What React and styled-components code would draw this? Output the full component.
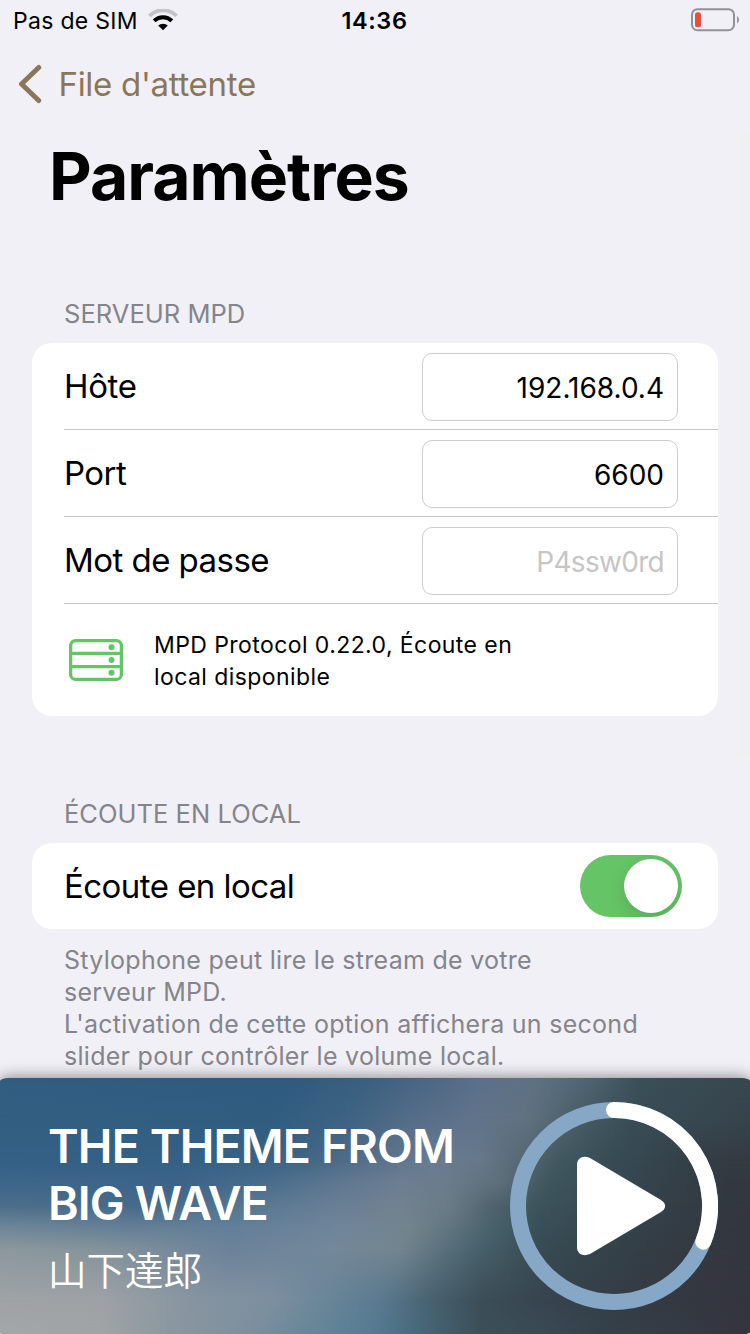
import React from "react";
import styled, { createGlobalStyle } from "styled-components";

const GlobalStyle = createGlobalStyle`
  * { box-sizing: border-box; }
  html, body { margin: 0; padding: 0; background: #f1f0f6; }
  body { font-family: Inter, "Noto Sans CJK JP", sans-serif; color: #000; }
`;

const Screen = styled.div`
  position: relative;
  width: 750px;
  height: 1334px;
  display: flex;
  flex-direction: column;
  overflow: hidden;
  background: #f1f0f6;
`;

const StatusBar = styled.header`
  height: 40px;
  flex: none;
  display: grid;
  grid-template-columns: 1fr auto 1fr;
  grid-template-rows: 40px;
  align-items: center;
  padding: 0 11px 0 13px;
  font-size: 23px;
  line-height: 38px;
`;

const Carrier = styled.div`
  display: flex;
  align-items: center;
  gap: 10px;
  padding-top: 2px;
  letter-spacing: 0.3px;

  svg { margin-top: -2px; }
`;

const Clock = styled.time`
  padding-top: 2px;
  margin-left: -3px;
  font-size: 23.5px;
  font-weight: 600;
  letter-spacing: 0.6px;
`;

const Battery = styled.svg`
  justify-self: end;
`;

const NavBar = styled.nav`
  height: 88px;
  flex: none;
  display: flex;
  align-items: center;
  padding-left: 18px;
`;

const BackLink = styled.a`
  display: flex;
  align-items: center;
  gap: 16.5px;
  color: #8a775b;
  font-size: 33px;
  line-height: 40px;
  letter-spacing: -0.3px;
`;

const Content = styled.main`
  flex: 1;
  min-height: 0;
  overflow: hidden;
`;

const ScrollTrough = styled.div`
  position: absolute;
  top: 134px;
  right: 0;
  width: 12px;
  height: 623px;
  background: #efeff4;
`;

const Title = styled.h1`
  margin: 0;
  padding: 8px 0 0 49px;
  font-size: 66px;
  line-height: 80px;
  font-weight: 700;
  letter-spacing: -1px;
`;

const SectionHeader = styled.h2`
  margin: ${(p) => p.$gap}px 0 13px 64px;
  font-size: 25.5px;
  line-height: 32px;
  font-weight: 400;
  letter-spacing: 0.03px;
  color: #85848a;
`;

const Card = styled.section`
  margin: 0 32px;
  padding-left: 32px;
  border-radius: 20px;
  background: #fff;
`;

const Row = styled.div`
  height: ${(p) => p.$height || 87}px;
  display: flex;
  align-items: center;
  justify-content: space-between;
  padding-right: ${(p) => p.$end || 40}px;
  border-bottom: ${(p) => (p.$last ? "none" : "1px solid #c6c6c8")};
`;

const Label = styled.label`
  font-size: 33px;
  line-height: 40px;
  letter-spacing: ${(p) => p.$track || -0.55}px;
`;

const Field = styled.input`
  width: 256px;
  height: 68px;
  margin: 2px 0 0;
  padding: 2px 13px 0;
  border: 1px solid #cdcdcd;
  border-radius: 10px;
  background: #fff;
  color: #000;
  font: 400 28px Inter, sans-serif;
  text-align: right;
  outline: none;
  &::placeholder { color: #c5c5c7; opacity: 1; letter-spacing: -0.7px; }
`;

const ServerRow = styled.div`
  height: 112px;
  display: flex;
  align-items: center;
  padding-left: 4px;
  gap: 30px;
`;

const ServerText = styled.p`
  margin: 0;
  padding-top: 1px;
  font-size: 23px;
  line-height: 32px;
  letter-spacing: 0.42px;
`;

const Switch = styled.span`
  width: 102px;
  height: 62px;
  padding: 4px;
  display: flex;
  justify-content: flex-end;
  border-radius: 31px;
  background: #65c466;
  overflow: hidden;
`;

const Knob = styled.span`
  width: 54px;
  height: 54px;
  border-radius: 50%;
  background: #fff;
  box-shadow: 0 6px 16px rgba(0, 0, 0, 0.13);
`;

const Footnote = styled.p`
  margin: 15px 64px 0;
  font-size: 25px;
  line-height: 32px;
  letter-spacing: 0.28px;
  font-feature-settings: "calt" 0, "liga" 0;
  color: #85848a;
`;

const PlayerShadow = styled.div`
  position: relative;
  flex: none;
  border-radius: 8px / 3px;
  box-shadow: 0 0 16px rgba(0, 0, 0, 0.5);
`;

const Player = styled.footer`
  height: 256px;
  display: grid;
  border-radius: 8px / 3px;
  background: #35424b;
  overflow: hidden;
`;

const Wash = styled.div`
  grid-area: 1 / 1;
  background: linear-gradient(to right, ${(p) => p.$stops});
  mask-image: ${(p) =>
    p.$to ? `linear-gradient(to bottom, transparent ${p.$from}px, #000 ${p.$to}px)` : "none"};
`;

const PlayerBody = styled.div`
  grid-area: 1 / 1;
  position: relative;
  display: flex;
  align-items: center;
  justify-content: space-between;
  padding: 0 32px 0 48px;
`;

const Track = styled.div`
  color: #fff;
`;

const TrackTitle = styled.div`
  width: 430px;
  margin-top: 2px;
  font-size: 46.5px;
  line-height: 57px;
  font-weight: 600;
  letter-spacing: -0.85px;
`;

const Artist = styled.div`
  margin-top: 8px;
  font-family: "Noto Sans CJK JP", sans-serif;
  font-size: 38.5px;
  line-height: 56px;
  font-weight: 350;
`;

const washes = [
  { y: 0, stops: "#315d80 0px, #2f5b7e 290px, #3b607f 370px, #4c6784 430px, #5c708a 480px, #5f7284 535px, #4f6472 590px, #3a4f58 640px, #38474f 750px" },
  { y: 44, stops: "#335f82 0px, #305d80 270px, #3f6383 350px, #556e88 410px, #61738b 470px, #607280 525px, #43585f 590px, #384d55 630px, #36434b 750px" },
  { y: 82, stops: "#346084 0px, #356186 210px, #3f6585 300px, #5b7189 380px, #687c92 430px, #66798a 480px, #566974 520px, #41575f 560px, #374c55 610px, #343c44 710px, #343a43 750px" },
  { y: 105, stops: "#3d668a 0px, #3c6489 180px, #4a6e8b 270px, #5f7891 340px, #6c7e93 400px, #6c7c8c 445px, #5c6f7a 500px, #3e555d 550px, #364851 620px, #33383f 730px" },
  { y: 128, stops: "#4d6e88 0px, #47698a 150px, #577891 250px, #687e95 330px, #72828f 400px, #6a7b86 450px, #50646f 490px, #3c535b 540px, #35424a 640px, #33373f 740px" },
  { y: 150, stops: "#6f8799 0px, #678096 120px, #62809a 240px, #70859a 340px, #72848e 410px, #607580 450px, #4a626c 490px, #394f57 540px, #343f47 650px, #33363f 740px" },
  { y: 172, stops: "#8d989f 0px, #85949b 100px, #6c829a 230px, #74889a 330px, #72858f 400px, #566d79 450px, #47606b 480px, #374b52 540px, #343e46 640px, #33363f 740px" },
  { y: 222, stops: "#9ea3a6 0px, #9ea2a6 100px, #8594a0 200px, #7d90a0 270px, #688598 330px, #5a7a90 380px, #486270 430px, #3c4e58 480px, #37454e 540px, #343b44 640px, #34353f 740px" },
  { y: 256, stops: "#a3a7a9 0px, #a0a4a6 100px, #8b97a0 170px, #7c8f9f 250px, #668698 310px, #567b95 370px, #46687a 420px, #3d5059 480px, #3a4a55 540px, #35424b 600px, #34353f 740px" },
];

function WifiIcon() {
  return (
    <svg width="30" height="22" viewBox="0 0 30 22" fill="none">
      <path d="M1.4 6.9 A19.2 19.2 0 0 1 28.6 6.9" stroke="#c3c2c8" strokeWidth="3.8" />
      <path d="M6.2 11.9 A12.4 12.4 0 0 1 23.8 11.9" stroke="#000" strokeWidth="4" />
      <path d="M15 21.2 L10.2 16.6 A7 7 0 0 1 19.8 16.6 Z" fill="#000" />
    </svg>
  );
}

function ServerIcon() {
  return (
    <svg width="56" height="44" viewBox="0 0 56 44" fill="none" stroke="#65c466">
      <rect x="2.6" y="2.6" width="50.8" height="38.8" rx="5" strokeWidth="3.3" />
      <path d="M2 15.4H54M2 28.6H54" strokeWidth="3.200" />
      <g fill="#65c466" stroke="none">
        <circle cx="43.5" cy="9.3" r="3" />
        <circle cx="43.5" cy="22" r="3" />
        <circle cx="43.5" cy="34.7" r="3" />
      </g>
    </svg>
  );
}

function PlayProgress() {
  return (
    <svg width="208" height="208" viewBox="0 0 208 208" fill="none">
      <circle cx="104" cy="104" r="96" stroke="#86a7c6" strokeWidth="16" />
      <path d="M104 8 A96 96 0 0 1 193.3 139.6" stroke="#fff" strokeWidth="16" strokeLinecap="round" />
      <path
        d="M67 63 C67 56 73 53 80 56 L151 98 C156.500 101.500 156.500 106.500 151 110 L80 152 C73 155 67 152 67 145 Z"
        fill="#fff"
      />
    </svg>
  );
}

export default function App() {
  return (
    <Screen>
      <GlobalStyle />
      <StatusBar>
        <Carrier>
          Pas de SIM
          <WifiIcon />
        </Carrier>
        <Clock>14:36</Clock>
        <Battery width="48" height="24" viewBox="0 0 48 24" fill="none">
          <rect x="1" y="1.200" width="42" height="21" rx="5.500" stroke="#929197" strokeWidth="2" />
          <rect x="4" y="4.200" width="6" height="15" rx="2.500" fill="#eb4d3d" />
          <path d="M46 8 Q48 9 48 11.700 T46 15.500 Z" fill="#929197" />
        </Battery>
      </StatusBar>
      <NavBar>
        <BackLink>
          <svg width="24" height="40" viewBox="0 0 24 40" fill="none">
            <path d="M20.700 3.500 L3.500 20 L20.700 36.500" stroke="#8a775b" strokeWidth="5" strokeLinecap="round" strokeLinejoin="round" />
          </svg>
          File d'attente
        </BackLink>
      </NavBar>
      <Content>
        <Title>Paramètres</Title>
        <SectionHeader $gap={82}>SERVEUR MPD</SectionHeader>
        <Card>
          <Row>
            <Label htmlFor="host" $track={-0.35}>Hôte</Label>
            <Field id="host" defaultValue="192.168.0.4" />
          </Row>
          <Row>
            <Label htmlFor="port">Port</Label>
            <Field id="port" defaultValue="6600" />
          </Row>
          <Row>
            <Label htmlFor="password">Mot de passe</Label>
            <Field id="password" placeholder="P4ssw0rd" />
          </Row>
          <ServerRow>
            <ServerIcon />
            <ServerText>
              MPD Protocol 0.22.0, Écoute en
              <br />
              local disponible
            </ServerText>
          </ServerRow>
        </Card>
        <SectionHeader $gap={82}>ÉCOUTE EN LOCAL</SectionHeader>
        <Card>
          <Row $height={86} $end={36} $last>
            <Label>Écoute en local</Label>
            <Switch role="switch" aria-checked="true">
              <Knob />
            </Switch>
          </Row>
        </Card>
        <Footnote>
          Stylophone peut lire le stream de votre
          <br />
          serveur MPD.
          <br />
          L'activation de cette option affichera un second
          <br />
          slider pour contrôler le volume local.
        </Footnote>
      </Content>
      <ScrollTrough />
      <PlayerShadow>
        <Player>
          {washes.map((w, i) => (
            <Wash key={w.y} $stops={w.stops} $from={i ? washes[i - 1].y : 0} $to={w.y} />
          ))}
          <PlayerBody>
            <Track>
              <TrackTitle>
                THE THEME FROM
                <br />
                BIG WAVE
              </TrackTitle>
              <Artist lang="ja">山下達郎</Artist>
            </Track>
            <PlayProgress />
          </PlayerBody>
        </Player>
      </PlayerShadow>
    </Screen>
  );
}
